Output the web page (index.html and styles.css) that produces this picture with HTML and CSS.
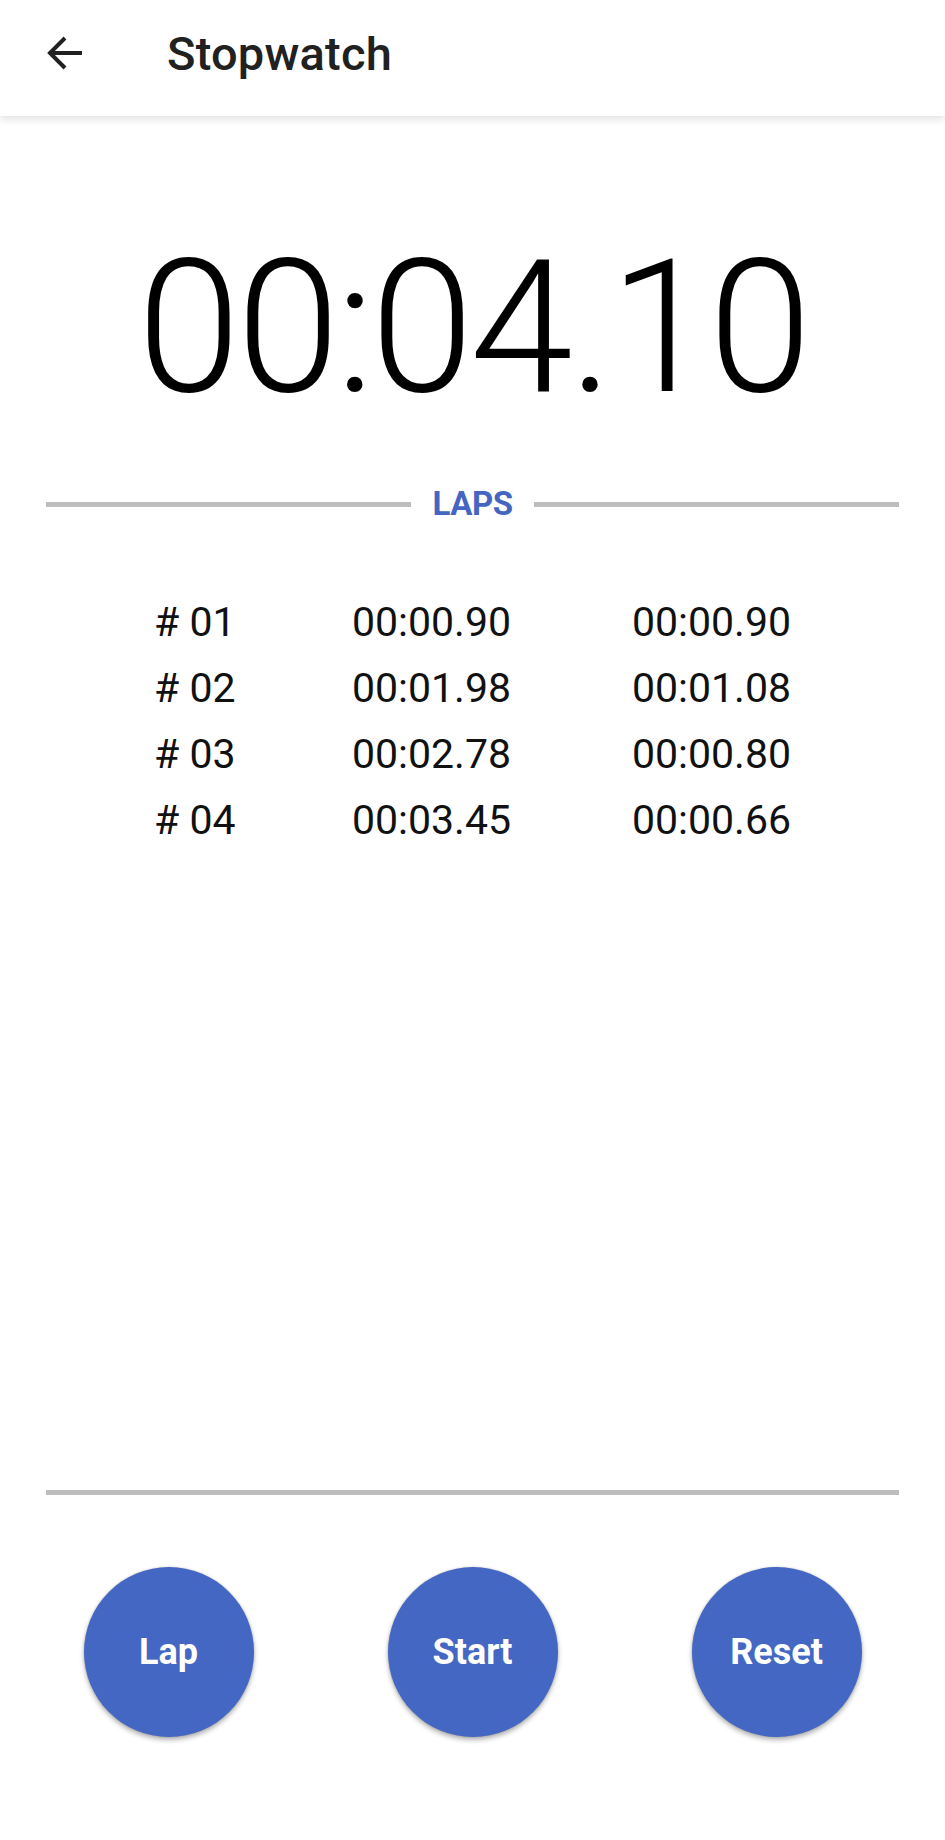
FILE: index.html
```html
<!DOCTYPE html>
<html lang="en">
<head>
<meta charset="utf-8">
<title>Stopwatch</title>
<link rel="stylesheet" href="styles.css">
</head>
<body>
<div class="app">
  <header class="toolbar">
    <svg class="back" viewBox="0 0 40 40" width="40" height="40" aria-hidden="true">
      <path d="M37 20H5M20 5L5 20L20 35" fill="none" stroke="#212121" stroke-width="4" stroke-linecap="butt" stroke-linejoin="miter"/>
    </svg>
    <h1 class="title">Stopwatch</h1>
  </header>

  <main class="main">
    <div class="time">00:04.10</div>

    <div class="divider">
      <span class="line"></span>
      <span class="divider-label">LAPS</span>
      <span class="line"></span>
    </div>

    <div class="laps">
      <div class="lap"><span>#&nbsp;01</span><span>00:00.90</span><span>00:00.90</span></div>
      <div class="lap"><span>#&nbsp;02</span><span>00:01.98</span><span>00:01.08</span></div>
      <div class="lap"><span>#&nbsp;03</span><span>00:02.78</span><span>00:00.80</span></div>
      <div class="lap"><span>#&nbsp;04</span><span>00:03.45</span><span>00:00.66</span></div>
    </div>
  </main>

  <footer class="footer">
    <div class="rule"></div>
    <div class="buttons">
      <button class="round">Lap</button>
      <button class="round">Start</button>
      <button class="round">Reset</button>
    </div>
  </footer>
</div>
</body>
</html>
```

FILE: styles.css
```css
* { box-sizing: border-box; }

html, body {
  margin: 0;
  padding: 0;
  background: #ffffff;
}

body {
  font-family: Roboto, "Noto Sans", "Liberation Sans", sans-serif;
  color: #000;
}

.app {
  min-height: 1840px;
  display: flex;
  flex-direction: column;
}

.toolbar {
  height: 116px;
  display: flex;
  align-items: center;
  padding-left: 45px;
  background: #fff;
  box-shadow: 0 3px 8px rgba(0, 0, 0, 0.12);
  position: relative;
  z-index: 1;
}

.back {
  display: block;
  margin-top: -10px;
}

.title {
  margin: 0 0 0 82px;
  font-size: 47px;
  font-weight: 500;
  color: #212121;
  line-height: 1;
  margin-top: -10px;
  letter-spacing: 0.2px;
}

.main {
  flex: 1;
  display: flex;
  flex-direction: column;
}

.time {
  margin-top: 118px;
  font-size: 186px;
  font-weight: 300;
  line-height: 186px;
  text-align: center;
  color: #000;
  letter-spacing: -4px;
}

.divider {
  margin-top: 64px;
  display: flex;
  align-items: center;
  padding: 0 46px;
}

.line {
  flex: 1;
  height: 5px;
  background: #bdbdbd;
}

.divider-label {
  margin: 0 22px;
  font-size: 33px;
  font-weight: 700;
  color: #4466c2;
  line-height: 40px;
  letter-spacing: -0.5px;
}

.laps {
  margin-top: 65px;
  padding-left: 154px;
}

.lap {
  display: grid;
  grid-template-columns: 198px 280px auto;
  font-size: 41px;
  line-height: 66px;
  color: #111;
}

.footer {
  display: flex;
  flex-direction: column;
}

.rule {
  margin: 3px 46px 0;
  height: 5px;
  background: #bdbdbd;
}

.buttons {
  display: flex;
  justify-content: center;
  gap: 134px;
  padding: 72px 0 103px;
}

.round {
  width: 170px;
  height: 170px;
  border-radius: 50%;
  border: none;
  background: #4467c4;
  color: #fff;
  font-family: Roboto, "Noto Sans", "Liberation Sans", sans-serif;
  font-size: 36px;
  font-weight: 700;
  box-shadow: 0 3px 5px rgba(0, 0, 0, 0.3), 0 0 2px rgba(0, 0, 0, 0.2);
  padding: 0;
}
```
